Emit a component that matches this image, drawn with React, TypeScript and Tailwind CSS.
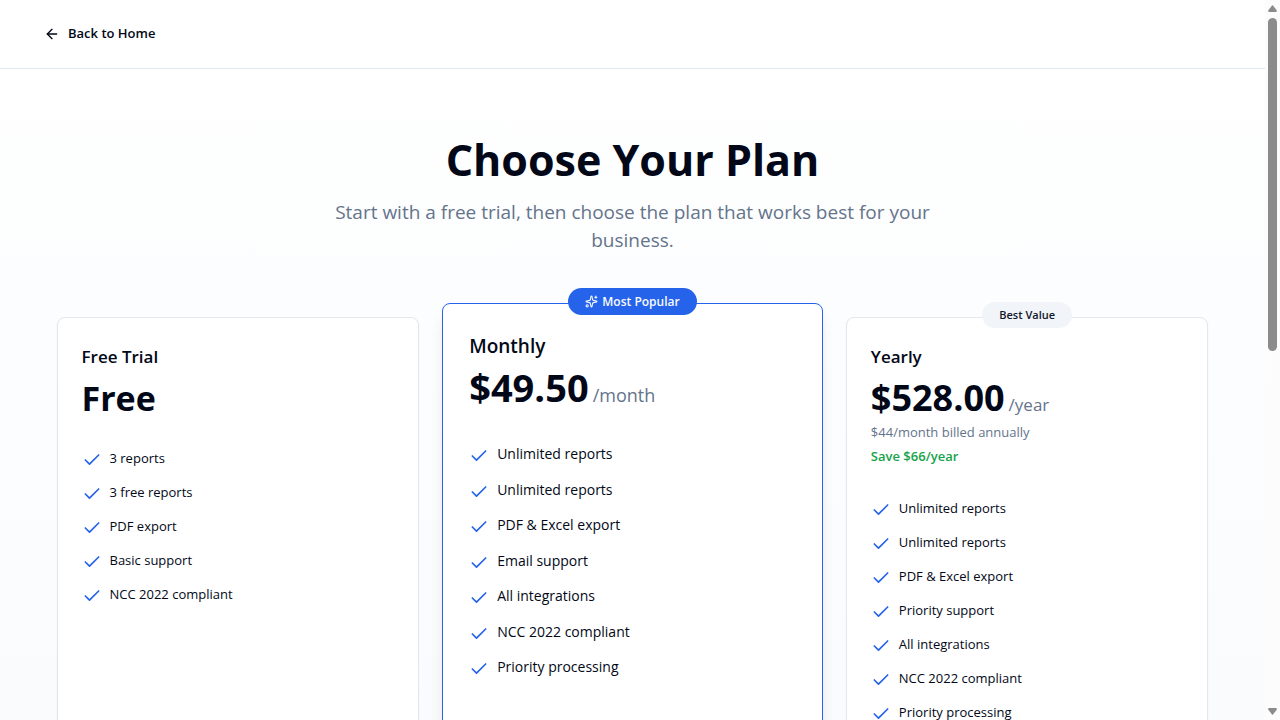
import { ArrowLeft, Check, Sparkles } from "lucide-react";

const freeFeatures = ["3 reports", "3 free reports", "PDF export", "Basic support", "NCC 2022 compliant"];

const monthlyFeatures = [
  "Unlimited reports",
  "Unlimited reports",
  "PDF & Excel export",
  "Email support",
  "All integrations",
  "NCC 2022 compliant",
  "Priority processing",
];

const yearlyFeatures = [
  "Unlimited reports",
  "Unlimited reports",
  "PDF & Excel export",
  "Priority support",
  "All integrations",
  "NCC 2022 compliant",
  "Priority processing",
];

function FeatureList({ items }: { items: string[] }) {
  return (
    <ul className="flex flex-col gap-3">
      {items.map((item, i) => (
        <li key={i} className="flex items-start gap-2">
          <Check className="mt-0.5 h-5 w-5 shrink-0 text-[#2563eb]" />
          <span className="text-[13px] leading-5">{item}</span>
        </li>
      ))}
    </ul>
  );
}

function FeaturedList({ items }: { items: string[] }) {
  return (
    <ul className="flex h-[236px] flex-col justify-between">
      {items.map((item, i) => (
        <li key={i} className="flex items-start gap-2">
          <Check className="mt-[3px] h-5 w-5 shrink-0 text-[#2563eb]" />
          <span className="text-[14px] leading-[21px]">{item}</span>
        </li>
      ))}
    </ul>
  );
}

function Scrollbar() {
  return (
    <div aria-hidden="true" className="flex w-[15px] shrink-0 flex-col items-center bg-[#fcfcfc] py-[5px]">
      <svg width="9" height="7" viewBox="0 0 9 7" className="shrink-0" fill="#8b8b8b">
        <path d="M4 .4Q4.500 0 5 .4L8.800 5.500Q9 7 8 7H1Q0 7 .2 5.500Z" />
      </svg>
      <div className="mt-1.5 flex min-h-0 w-[9px] flex-1">
        <div className="h-[48.3%] w-full rounded-full bg-[#8b8b8b]" />
      </div>
      <svg width="9" height="7" viewBox="0 0 9 7" className="shrink-0" fill="#8b8b8b">
        <path d="M4 6.600Q4.500 7 5 6.600L8.800 1.500Q9 0 8 0H1Q0 0 .2 1.500Z" />
      </svg>
    </div>
  );
}

export default function App() {
  return (
    <div className="flex h-screen overflow-hidden font-['Open_Sans','Noto_Sans',sans-serif] text-[#020817]">
      <div className="min-w-0 flex-1 overflow-hidden bg-linear-to-b from-white to-[#f9fbfd]">
        <header className="border-b border-[#e2e8f0] bg-white px-8 py-4">
          <a href="#home" className="inline-flex h-9 items-center gap-2 rounded-md px-3 text-[13px] font-semibold">
            <ArrowLeft className="h-4 w-4" />
            Back to Home
          </a>
        </header>

        <main className="px-8 pt-16">
          <div className="mx-auto max-w-2xl text-center">
            <h1 className="text-[43px] leading-[54px] font-bold">Choose Your Plan</h1>
            <p className="mt-[11px] text-[19px] leading-7 text-[#64748b]">
              Start with a free trial, then choose the plan that works best for your business.
            </p>
          </div>

          <div className="mx-auto mt-[63px] grid max-w-6xl grid-cols-3 gap-8">
            <section className="min-h-[560px] rounded-lg border border-[#e2e8f0] bg-white px-6 pt-[25px] pb-6 shadow-xs">
              <h2 className="text-[17px] leading-7 font-semibold">Free Trial</h2>
              <p className="mt-[7px] mb-[30px] text-[34px] leading-10 font-bold">Free</p>
              <FeatureList items={freeFeatures} />
            </section>

            <section className="relative -mx-[9px] -mt-3.5 min-h-[588px] rounded-lg border border-[#2563eb] bg-white px-[26px] pt-[27px] pb-[26px] shadow-lg">
              <div className="absolute inset-x-0 -top-4 flex justify-center">
                <span className="flex h-[27px] items-center gap-1 rounded-full bg-[#2563eb] px-[17px] text-[12px] font-semibold text-[#f8fafc]">
                  <Sparkles className="h-[13px] w-[13px]" />
                  Most Popular
                </span>
              </div>
              <h2 className="text-[19px] leading-[30px] font-semibold">Monthly</h2>
              <p className="mt-[5px] mb-[35px] flex h-[42px] items-baseline gap-1 leading-[42px]">
                <span className="text-[38px] font-bold">$49.50</span>
                <span className="text-[18px] text-[#64748b]">/month</span>
              </p>
              <FeaturedList items={monthlyFeatures} />
            </section>

            <section className="relative min-h-[560px] rounded-lg border border-[#e2e8f0] bg-white px-6 pt-[25px] pb-6 shadow-xs">
              <div className="absolute inset-x-0 -top-4 flex justify-center">
                <span className="flex h-[26px] items-center rounded-full bg-[#f1f5f9] px-[17px] text-[11px] font-semibold text-[#0f172a]">
                  Best Value
                </span>
              </div>
              <h2 className="text-[17px] leading-7 font-semibold">Yearly</h2>
              <p className="mt-[7px] flex h-10 items-baseline gap-1 leading-10">
                <span className="text-[36px] font-bold">$528.00</span>
                <span className="text-[17px] text-[#64748b]">/year</span>
              </p>
              <p className="mt-1 text-[13px] leading-5 text-[#64748b]">$44/month billed annually</p>
              <p className="mt-1 mb-8 text-[13px] leading-5 font-semibold text-[#16a34a]">Save $66/year</p>
              <FeatureList items={yearlyFeatures} />
            </section>
          </div>
        </main>
      </div>
      <Scrollbar />
    </div>
  );
}
